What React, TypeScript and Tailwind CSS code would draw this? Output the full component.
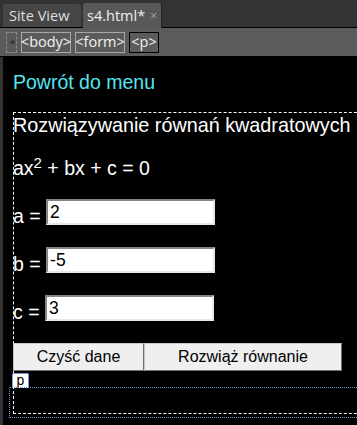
import React from 'react';

const TagButton: React.FC<{ label: string; width: string; selected?: boolean }> = ({ label, width, selected }) => (
  <div
    className={`flex h-[21px] items-center justify-center border text-[14.5px] leading-none text-[#f2f2f2] ${width} ${
      selected ? 'border-black' : 'border-[#a8a8a8]'
    }`}
  >
    {label}
  </div>
);

const Field: React.FC<{ name: string; value: string }> = ({ name, value }) => (
  <div className="flex items-start">
    <span className="pt-[6px] text-[19.5px] leading-[22px] whitespace-pre">{name} = </span>
    <input
      readOnly
      defaultValue={value}
      className="h-[26px] w-[169px] border-2 border-t-[#858585] border-l-[#858585] border-r-[#e6e6e6] border-b-[#e6e6e6] bg-white pl-[2px] text-[17.5px] text-black outline-none"
      style={{ fontFamily: '"Liberation Sans", Arial, sans-serif' }}
    />
  </div>
);

const App: React.FC = () => {
  return (
    <div
      className="flex h-[425px] w-[357px] flex-col overflow-hidden bg-black text-white"
      style={{ fontFamily: '"Liberation Sans", Arial, sans-serif' }}
    >
      {/* document tabs */}
      <div
        className="flex h-[28px] items-end bg-[#333]"
        style={{ fontFamily: '"Open Sans", "Noto Sans", sans-serif' }}
      >
        <div className="h-full w-[3px] border-b border-black" />
        <div className="flex h-[24px] w-[78px] items-center rounded-t-[3px] border-b border-black bg-[#464646] pl-[6px] text-[14.5px] text-[#dedede]">
          Site View
        </div>
        <div className="h-full w-[2px] border-b border-black" />
        <div className="flex h-[25px] w-[79px] items-center rounded-t-[3px] border-r border-[#222] bg-[#585858] pl-[4px] text-[14.5px] text-[#eeeeee]">
          s4.html*
          <span className="ml-[5px] text-[12px] text-[#a8a8a8]">×</span>
        </div>
        <div className="h-full flex-1 border-b border-black" />
      </div>

      {/* tag selector */}
      <div
        className="flex h-[29px] items-center gap-[4px] border-b border-black bg-[#5b5b5b] pl-[6px]"
        style={{ fontFamily: '"Open Sans", "Noto Sans", sans-serif' }}
      >
        <div className="flex h-[21px] w-[11px] items-center justify-center border border-dashed border-[#8a8a8a] text-[7px] text-[#3a3a3a]">
          ◀
        </div>
        <TagButton label="<body>" width="w-[50px]" />
        <TagButton label="<form>" width="w-[50px]" />
        <TagButton label="<p>" width="w-[30px]" selected />
      </div>

      {/* design view */}
      <div className="relative flex-1 overflow-hidden border-l-[3px] border-[#333] pl-[10px] pt-[14px]">
        <div className="text-[19.5px] leading-[22px] text-[#56e4f0]">Powrót do menu</div>

        <div className="-mr-[40px] mt-[19px] h-[302px] border-t border-l border-b border-dashed border-white">
          <div className="pt-[1px] -ml-[1px] text-[19.8px] leading-[22px] whitespace-nowrap">
            Rozwiązywanie równań kwadratowych
          </div>

          <div className="-ml-[1px] mt-[21px] h-[22px] text-[19.5px] leading-[22px] whitespace-nowrap">
            ax<sup className="text-[15px] leading-none">2</sup> + bx + c = 0
          </div>

          <div className="-ml-[1px] mt-[20px] flex flex-col gap-[20px]">
            <Field name="a" value="2" />
            <Field name="b" value="-5" />
            <Field name="c" value="3" />
          </div>

          <div className="-ml-[1px] mt-[20px] flex">
            <button className="h-[28px] w-[131px] border border-t-[#c8c8c8] border-l-[#c8c8c8] border-r-[#707070] border-b-[#707070] bg-[#efefef] text-[16px] text-black">
              Czyść dane
            </button>
            <button className="h-[28px] w-[198px] border border-t-[#c8c8c8] border-l-[#c8c8c8] border-r-[#707070] border-b-[#707070] bg-[#efefef] text-[16px] text-black">
              Rozwiąż równanie
            </button>
          </div>
        </div>

        {/* selected element marker */}
        <div className="absolute left-[9px] top-[316px] flex h-[15px] w-[17px] items-start justify-center rounded-t-[2px] border border-b-0 border-[#7c9ad8] bg-white text-[14px] leading-[12px] text-black">
          p
        </div>
        <div className="absolute -right-[40px] left-[6px] top-[330px] h-[31px] border-t border-l border-b border-dotted border-[#6f8fd6]" />
      </div>
    </div>
  );
};

export default App;
